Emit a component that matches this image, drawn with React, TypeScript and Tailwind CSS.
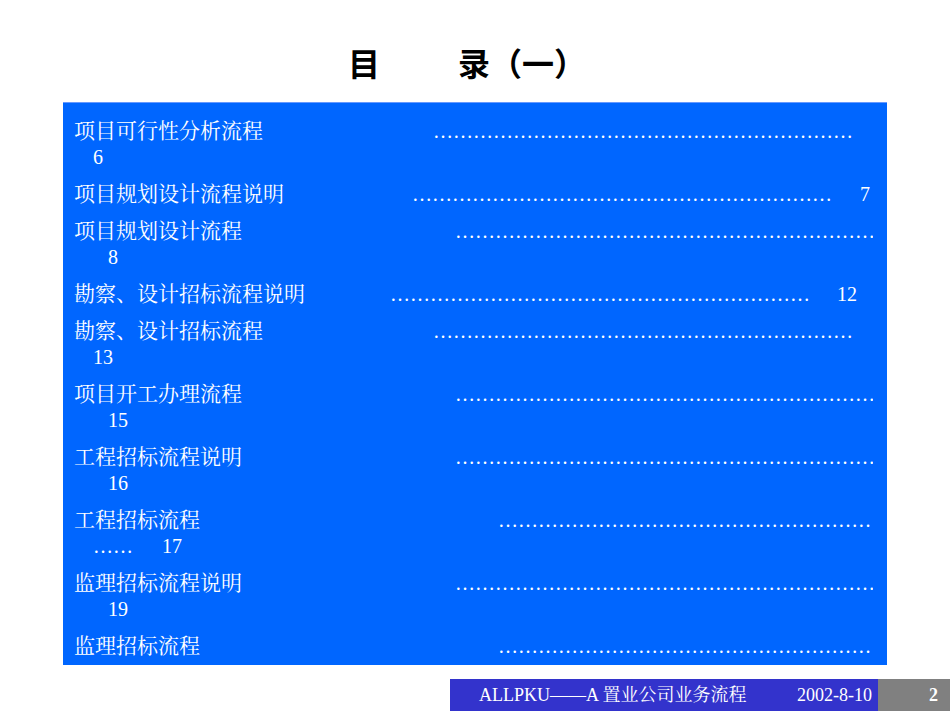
const serif = { fontFamily: '"Liberation Serif","Noto Serif CJK SC","Noto Sans CJK SC",serif' };
const dots = "…".repeat(30);

type E = { t: string; dx: number; dw: number; n?: string; nx?: number; inline?: boolean; pre?: string };
const entries: E[] = [
  { t: "项目可行性分析流程", dx: 433, dw: 420, n: "6", nx: 93 },
  { t: "项目规划设计流程说明", dx: 412, dw: 420, n: "7", nx: 860, inline: true },
  { t: "项目规划设计流程", dx: 455, dw: 418, n: "8", nx: 108 },
  { t: "勘察、设计招标流程说明", dx: 390, dw: 420, n: "12", nx: 837, inline: true },
  { t: "勘察、设计招标流程", dx: 433, dw: 420, n: "13", nx: 93 },
  { t: "项目开工办理流程", dx: 455, dw: 418, n: "15", nx: 108 },
  { t: "工程招标流程说明", dx: 455, dw: 418, n: "16", nx: 108 },
  { t: "工程招标流程", dx: 498, dw: 375, n: "17", nx: 161, pre: "……" },
  { t: "监理招标流程说明", dx: 455, dw: 418, n: "19", nx: 108 },
  { t: "监理招标流程", dx: 498, dw: 375 },
];

function Row({ e }: { e: E }) {
  return (
    <div className="text-white leading-[26px] flex flex-col">
      <div className="flex h-[26px] items-baseline">
        <span className="whitespace-nowrap text-[21px] shrink-0" style={{ width: e.dx - 74 }}>{e.t}</span>
        <span className="overflow-hidden whitespace-nowrap text-[20px] shrink-0" style={{ width: e.dw }}>{dots}</span>
        {e.inline && <span className="text-[20px]" style={{ marginLeft: e.nx! - e.dx - e.dw }}>{e.n}</span>}
      </div>
      {!e.inline && e.n && (
        <div className="flex h-[26px] text-[20px]" style={{ paddingLeft: e.nx! - 74 }}>
          {e.pre && <span className="ml-[-68px] mr-[29px]">{e.pre}</span>}
          <span>{e.n}</span>
        </div>
      )}
    </div>
  );
}

export default function App() {
  return (
    <div className="w-[950px] h-[713px] bg-white flex flex-col overflow-hidden" style={serif}>
      <div className="h-[102px] flex items-center justify-center pt-[22px]">
        <div className="text-[32px] font-bold text-black ml-[-16px]" style={{ fontFamily: '"Noto Sans CJK SC",sans-serif' }}>
          目<span className="inline-block w-[78px]"></span>录（一）
        </div>
      </div>
      <div className="ml-[63px] w-[824px] h-[563px] bg-[#0066ff] border-t border-[#6699ff] pt-[15px] pl-[11px] flex flex-col gap-[11px] overflow-hidden">
        {entries.map((e, i) => <Row key={i} e={e} />)}
      </div>
      <div className="ml-[450px] mt-[14px] flex h-[32px]">
        <div className="w-[428px] bg-[#3333cc] text-white text-[18px] flex items-center pl-[29px]">
          <span>ALLPKU——A 置业公司业务流程</span>
          <span className="ml-auto mr-[6px]">2002-8-10</span>
        </div>
        <div className="w-[72px] bg-[#808080] text-white text-[18px] font-bold flex items-center justify-end pr-[12px]">2</div>
      </div>
    </div>
  );
}
